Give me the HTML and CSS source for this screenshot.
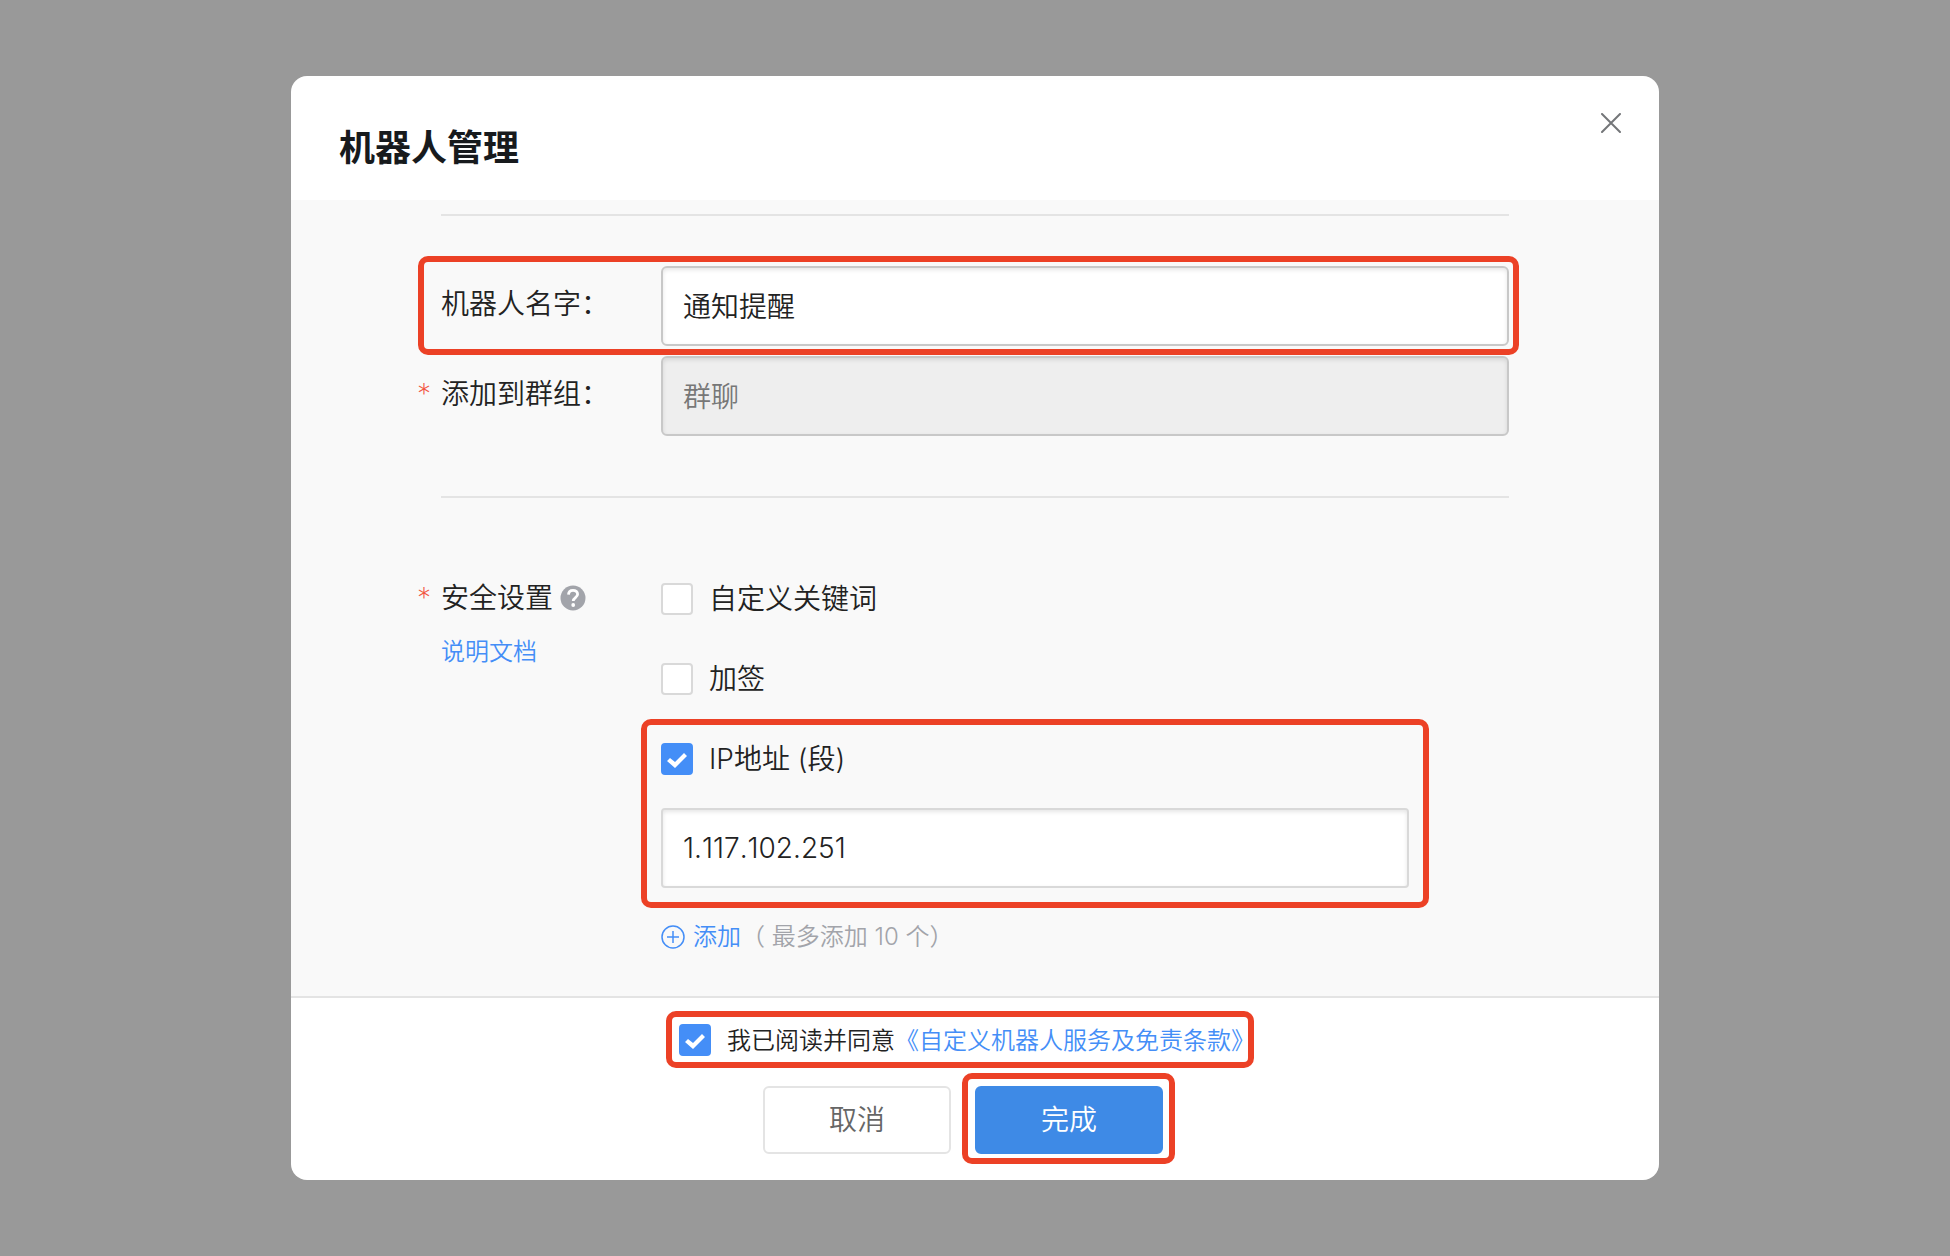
FILE: index.html
```html
<!DOCTYPE html>
<html lang="zh-CN">
<head>
    <meta charset="UTF-8">
    <meta name="viewport" content="width=device-width, initial-scale=1.0">
    <title>机器人管理</title>
    <link rel="stylesheet" href="styles.css">
</head>
<body>
    <form class="modal" id="robotForm">
        <header class="modal-header">
            <h1>机器人管理</h1>
            <button type="button" class="close" aria-label="关闭">
                <svg width="20" height="20" viewBox="0 0 20 20" fill="none" stroke="#747679" stroke-width="2" stroke-linecap="round">
                    <path d="M1 1l18 18M19 1L1 19"/>
                </svg>
            </button>
        </header>

        <div class="modal-body">
            <hr>
            <div class="form-group highlight highlight-name">
                <label for="name">机器人名字：</label>
                <input type="text" class="text-input" id="name" name="name" value="通知提醒">
            </div>
            <div class="form-group">
                <label for="group" class="required">添加到群组：</label>
                <input type="text" class="text-input" id="group" name="group" value="群聊" disabled>
            </div>
            <hr class="section-line">

            <div class="form-group security">
                <div class="security-label">
                    <span class="required">安全设置
                        <svg class="help" width="26" height="26" viewBox="0 0 26 26" fill="none">
                            <circle cx="13" cy="13" r="12.5" fill="#a2a4aa"/>
                            <path d="M8.5 9.6C8.6 6.7 10.5 5.3 13 5.3c2.7 0 4.600 1.600 4.600 4 0 3.300-4.400 3.200-4.400 6.800" stroke="#fff" stroke-width="2.8"/>
                            <circle cx="13.2" cy="20" r="1.9" fill="#fff"/>
                        </svg>
                    </span>
                    <a href="#">说明文档</a>
                </div>
                <div class="options">
                    <label class="option"><input type="checkbox" name="keyword">自定义关键词</label>
                    <label class="option"><input type="checkbox" name="sign">加签</label>
                    <div class="ip-group highlight highlight-ip">
                        <label class="option"><input type="checkbox" name="ip" checked>IP地址 (段)</label>
                        <input type="text" class="text-input" name="address" value="1.117.102.251" aria-label="IP地址">
                    </div>
                    <div class="add-row">
                        <button type="button" class="add">
                            <svg width="24" height="24" viewBox="0 0 24 24" fill="none" stroke="#448ef7" stroke-width="1.5">
                                <circle cx="12" cy="12" r="11"/>
                                <path d="M6 12h12M12 6v12"/>
                            </svg>
                            <span>添加</span>
                        </button>
                        <span>（ 最多添加 10 个）</span>
                    </div>
                </div>
            </div>
        </div>

        <footer class="modal-footer">
            <div class="agree highlight highlight-agree">
                <input type="checkbox" id="agree" name="agree" checked>
                <label for="agree">我已阅读并同意</label>
                <a href="#">《自定义机器人服务及免责条款》</a>
            </div>
            <div class="buttons">
                <button type="button" class="btn">取消</button>
                <button type="submit" class="btn btn-primary highlight highlight-submit">完成</button>
            </div>
        </footer>
    </form>
</body>
</html>
```
FILE: styles.css
```css
* {
    box-sizing: border-box;
}
body {
    font-family: Inter, "Noto Sans CJK SC", sans-serif;
    font-size: 28px;
    font-weight: 350;
    font-kerning: none;
    color: #222;
    background-color: #999;
    display: flex;
    justify-content: center;
    align-items: center;
    min-height: 100vh;
    margin: 0;
}
a {
    color: #448ef7;
    font-size: 24px;
    text-decoration: none;
}
input,
button {
    font-family: inherit;
    font-size: inherit;
    font-weight: inherit;
    font-kerning: inherit;
    margin: 0;
}
button {
    cursor: pointer;
}
.modal {
    background: #fff;
    border-radius: 16px;
    width: 90%;
    max-width: 1368px;
}

/* header */
.modal-header {
    display: flex;
    justify-content: space-between;
    align-items: flex-start;
    padding: 37px 38px 28px 48px;
}
.modal-header h1 {
    font-size: 36px;
    font-weight: 700;
    line-height: 48px;
    color: #171a1d;
    margin: 11px 0 0;
}
.close {
    display: flex;
    padding: 0;
    border: none;
    background: none;
}

/* body */
.modal-body {
    background: #f9f9f9;
    padding: 14px 150px 39px;
}
hr {
    height: 2px;
    border: none;
    background: #e4e4e4;
    margin: 0 0 50px;
}
.section-line {
    margin: 60px 0 81px;
}
.form-group {
    display: grid;
    grid-template-columns: 220px 1fr;
    line-height: 36px;
    margin-bottom: 10px;
}
.form-group > label {
    padding-top: 20px;
}
.required {
    position: relative;
}
.required::before {
    content: "*";
    position: absolute;
    left: -24px;
    font-weight: 200;
    color: #f25643;
}
.text-input {
    width: 100%;
    height: 80px;
    padding: 0 20px 2px;
    border: 2px solid #c8c8c8;
    border-radius: 6px;
    background: #fff;
    box-shadow: inset 0 2px 4px rgba(0, 0, 0, 0.1);
    color: #222;
}
.text-input:disabled {
    background: #eee;
    color: #777;
}
.security {
    margin-bottom: 0;
}
.security-label {
    display: flex;
    flex-direction: column;
    align-items: flex-start;
    gap: 18px;
    padding-top: 1px;
}
.security-label .required {
    display: flex;
    align-items: center;
    gap: 7px;
}
.options {
    display: flex;
    flex-direction: column;
    gap: 40px;
}
.option {
    display: flex;
    align-items: center;
    gap: 16px;
    height: 40px;
}
input[type="checkbox"] {
    appearance: none;
    flex: none;
    position: relative;
    width: 32px;
    height: 32px;
    border: 2px solid #d9d9d9;
    border-radius: 4px;
    background: #fff;
}
input[type="checkbox"]:checked {
    border-color: #448ef7;
    background: #448ef7;
}
input[type="checkbox"]:checked::after {
    content: "";
    position: absolute;
    inset: -2px;
    background: #fff;
    clip-path: polygon(6px 18px, 9px 15px, 14px 19px, 23px 10px, 26px 13px, 14px 25px);
}
.ip-group {
    width: 748px;
    max-width: 100%;
}
.ip-group .text-input {
    display: block;
    margin-top: 29px;
    padding: 0 20px;
    border-color: #d9d9d9;
    border-radius: 4px;
}
.add-row {
    display: flex;
    align-items: center;
    height: 40px;
    margin-top: -11px;
    font-size: 24px;
    color: #a2a4aa;
}
.add {
    display: flex;
    align-items: center;
    gap: 8px;
    padding: 0;
    border: none;
    background: none;
    color: #448ef7;
    line-height: 36px;
}

/* footer */
.modal-footer {
    display: flex;
    flex-direction: column;
    align-items: center;
    gap: 30px;
    padding: 26px 0;
    border-top: 2px solid #e4e4e4;
}
.agree {
    display: flex;
    align-items: center;
    height: 32px;
    margin-right: 16px;
    font-size: 24px;
    line-height: 32px;
}
.agree label,
.agree a {
    padding-top: 2px;
}
.agree label {
    margin-left: 16px;
}
.buttons {
    display: flex;
}
.btn {
    width: 188px;
    height: 68px;
    margin-right: 24px;
    padding: 0 0 4px;
    border: 2px solid #e4e4e4;
    border-radius: 6px;
    background: #fff;
    color: #666;
}
.btn-primary {
    border-color: #3e8ae6;
    background: #3e8ae6;
    color: #fff;
}

/* red frames round the fields to fill in */
.highlight {
    position: relative;
}
.highlight::after {
    content: "";
    position: absolute;
    border: 6px solid #ec4126;
    border-radius: 10px;
    pointer-events: none;
}
.highlight-name::after {
    inset: -10px -10px -9px -23px;
}
.highlight-ip::after {
    inset: -20px;
}
.highlight-agree::after {
    inset: -13px 1px -12px -13px;
}
.highlight-submit::after {
    inset: -15px -14px -12px -15px;
}
```
